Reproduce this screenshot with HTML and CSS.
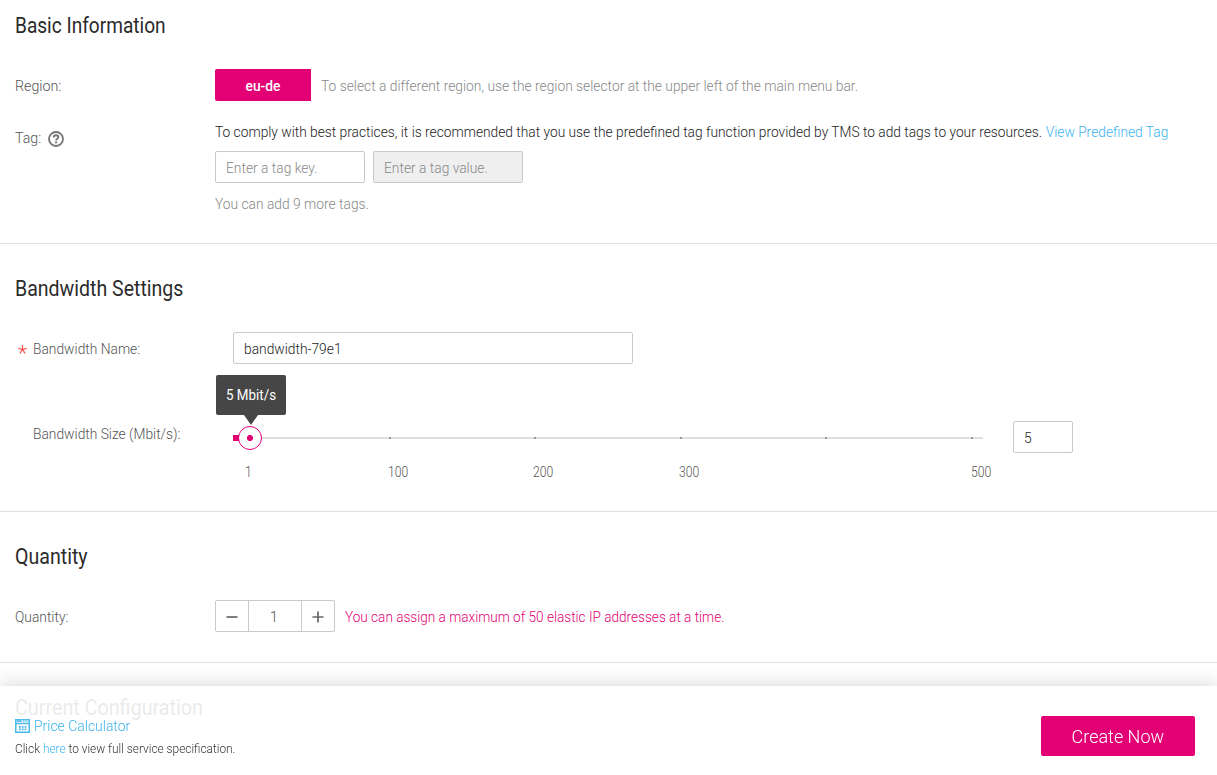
FILE: index.html
```
<!DOCTYPE html>
<html lang="en">
<head>
<meta charset="utf-8">
<title>Assign Elastic IP</title>
<link rel="stylesheet" href="styles.css">
</head>
<body>
<main class="page">
  <section class="section basic">
    <h2 class="title"><span class="t-basic">Basic Information</span></h2>
    <div class="row region-row">
      <div class="label"><span class="t-rlabel">Region:</span></div>
      <div class="region-btn"><span class="t-eu">eu-de</span></div>
      <div class="hint"><span class="t-region">To select a different region, use the region selector at the upper left of the main menu bar.</span></div>
    </div>
    <div class="row tag-row">
      <div class="label tag-label"><span class="t-tag">Tag:</span>
        <svg class="help" viewBox="0 0 16 16"><circle cx="8" cy="8" r="7" fill="none" stroke="#757575" stroke-width="1.8"/><path d="M5.700 6.500C5.700 5 6.700 4.300 8 4.300S10.300 5 10.300 6.200C10.300 7.600 8.100 7.800 8.100 9.500" fill="none" stroke="#757575" stroke-width="1.900"/><rect x="7.100" y="10.500" width="2" height="1.800" fill="#757575"/></svg>
      </div>
      <div class="tag-content">
        <p class="comply"><span>To comply with best practices, it is recommended that you use the predefined tag function provided by TMS to add tags to your resources.</span><a>View Predefined Tag</a></p>
        <div class="tag-inputs"><div class="field"><span class="t-key">Enter a tag key.</span></div><div class="field disabled"><span class="t-value">Enter a tag value.</span></div></div>
        <p class="more"><span class="t-more">You can add 9 more tags.</span></p>
      </div>
    </div>
  </section>

  <section class="section bandwidth">
    <h2 class="title"><span class="t-bandwidth">Bandwidth Settings</span></h2>
    <div class="row name-row">
      <div class="label"><svg class="star" viewBox="0 0 8 8"><path d="M4 0V4M0.200 2.900L4 4L7.800 2.900M1.700 7.400L4 4L6.300 7.400" fill="none" stroke="#f4514f" stroke-width="1.100"/></svg><span class="t-name">Bandwidth Name:</span></div>
      <div class="field name-field"><span class="t-bw">bandwidth-79e1</span></div>
    </div>
    <div class="row size-row">
      <div class="label"><span class="t-size">Bandwidth Size (Mbit/s):</span></div>
      <div class="slider">
        <div class="track">
          <i class="tick" style="left:156px"></i><i class="tick" style="left:301px"></i><i class="tick" style="left:447px"></i><i class="tick" style="left:592px"></i><i class="tick" style="left:738px"></i>
          <i class="fill"></i>
          <i class="knob"></i>
          <div class="tip"><span class="t-tip">5 Mbit/s</span></div>
        </div>
        <div class="scale">
          <span style="left:12px">1</span><span style="left:155px">100</span><span style="left:300px">200</span><span style="left:446px">300</span><span style="left:738px">500</span>
        </div>
      </div>
      <div class="field size-field"><span class="t-five">5</span></div>
    </div>
  </section>

  <section class="section quantity">
    <h2 class="title"><span class="t-quantity">Quantity</span></h2>
    <div class="row quantity-row">
      <div class="label"><span class="t-qlabel">Quantity:</span></div>
      <div class="stepper">
        <div class="step"><svg viewBox="0 0 12 12"><path d="M0.500 6H11.500" stroke="#666" stroke-width="1.700"/></svg></div>
        <div class="count"><span>1</span></div>
        <div class="step"><svg viewBox="0 0 12 12"><path d="M0.500 6H11.500M6 0.500V11.500" stroke="#666" stroke-width="1.700"/></svg></div>
      </div>
      <div class="limit"><span class="t-limit">You can assign a maximum of 50 elastic IP addresses at a time.</span></div>
    </div>
  </section>

  <section class="current">
    <h2 class="title"><span class="t-current">Current Configuration</span></h2>
  </section>
</main>

<footer class="footer">
  <div class="links">
    <div class="price"><svg class="calc" viewBox="0 0 15 14"><rect x="0.750" y="0.750" width="13.500" height="12.500" fill="none" stroke="#4ab9ee" stroke-width="1.500"/><path d="M0 4.500H15" stroke="#4ab9ee" stroke-width="1.500"/><path d="M2 2.200H6.500" stroke="#4ab9ee" stroke-width="1.500"/><path d="M8 2.400H12.500" stroke="#4ab9ee" stroke-width="1" stroke-dasharray="1 0.700"/><path d="M4 7.900H11.500M4 10.400H11.500" stroke="#4ab9ee" stroke-width="1.700" stroke-dasharray="1.800 1"/></svg><a class="t-price">Price Calculator</a></div>
    <p class="spec"><span class="t-spec">Click <a>here</a> to view full service specification.</span></p>
  </div>
  <div class="create"><span class="t-create">Create Now</span></div>
</footer>
</body>
</html>
```
FILE: styles.css
```
* { box-sizing: border-box; }
body { margin: 0; height: 775px; overflow: hidden; background: #fff; color: #1c1c1c; font: 300 15px/20px Roboto, "Liberation Sans", sans-serif; }
h2, p { margin: 0; }
span, a { white-space: nowrap; }
a { color: #3cb4ee; }
.section { padding: 0 15px; border-bottom: 1px solid #dfdfdf; }
.title { font-size: 22px; font-weight: 400; line-height: 30px; color: #2b2b2b; }
.row { display: flex; }
.label { width: 200px; flex: none; color: #555; }
.field { display: flex; align-items: center; height: 32px; padding: 2px 10px 0; border: 1px solid #c9c9c9; border-radius: 2px; background: #fff; color: #1c1c1c; }

/* Condensed lettering: each text is narrowed horizontally */
[class^="t-"] { display: inline-block; transform-origin: 0 50%; transform: scaleX(.92); }
.title .t-basic { transform: scaleX(.867); }
.title .t-bandwidth { transform: scaleX(.888); }
.title .t-quantity { transform: scaleX(.89); }
.title .t-current { transform: scaleX(.897); }
.label .t-rlabel, .label .t-tag { transform: scaleX(.95); }
.limit .t-limit { transform: scaleX(.906); }
.price .t-price { transform: scaleX(.93); }
.spec .t-spec { transform: scaleX(.913); }
.tip .t-tip { transform: scaleX(.893); transform-origin: 50% 50%; }
.region-btn .t-eu { transform-origin: 50% 50%; }
.create .t-create { transform: scaleX(.948); transform-origin: 50% 50%; }

.basic { height: 244px; padding-top: 11px; }
.region-row { margin-top: 28px; align-items: center; height: 32px; }
.region-row .label { padding-top: 2px; }
.region-btn { display: flex; justify-content: center; align-items: center; width: 96px; height: 32px; padding-top: 2px; border-radius: 2px 0 0 2px; background: #e20074; color: #fff; font-weight: 500; }
.hint { margin-left: 10px; padding-top: 2px; color: #888; }
.tag-row { margin-top: 21px; }
.tag-label { display: flex; gap: 5px; padding-top: 6px; }
.help { width: 16px; height: 16px; margin-top: 3px; }
.comply { display: inline-flex; gap: 4px; vertical-align: top; transform-origin: 0 50%; transform: scaleX(.9175); }
.tag-content { width: 1000px; flex: none; }
.tag-inputs { display: flex; gap: 8px; margin-top: 9px; }
.tag-inputs .field { width: 150px; color: #888; }
.tag-inputs .disabled { background: #efefef; }
.more { margin-top: 11px; color: #888; }

.bandwidth { height: 268px; padding-top: 30px; }
.name-row { margin-top: 28px; padding-left: 3px; align-items: center; }
.name-row .label { display: flex; align-items: center; gap: 6px; width: 215px; padding-top: 2px; }
.star { width: 9px; height: 9px; }
.name-field { width: 400px; }
.size-row { margin-top: 57px; padding-left: 18px; }
.size-row .label { padding-top: 3px; }
.slider { width: 750px; padding-top: 16px; }
.track { position: relative; height: 2px; background: #dfdfdf; }
.tick { position: absolute; top: 0; width: 2px; height: 2px; background: #999; }
.fill { position: absolute; left: 0; top: -2px; width: 6px; height: 6px; background: #e20074; }
.knob { position: absolute; left: 5px; top: -11px; width: 24px; height: 24px; border: 1px solid #e20074; border-radius: 50%; background: radial-gradient(circle, #e20074 2.700px, #fff 3.400px); }
.tip { position: absolute; left: -17px; top: -62px; width: 70px; height: 40px; display: flex; align-items: center; justify-content: center; border-radius: 2px; background: #464646; color: #fff; font-weight: 400; }
.tip::after { content: ""; position: absolute; left: 28px; top: 40px; border: 7px solid transparent; border-top: 10px solid #464646; border-bottom: 0; }
.scale { position: relative; height: 20px; margin-top: 23px; font-size: 14px; color: #555; }
.scale span { position: absolute; top: 0; transform-origin: 0 50%; transform: scaleX(.87); }
.size-field { width: 60px; margin-left: 30px; }

.quantity { height: 151px; padding-top: 30px; }
.quantity-row { margin-top: 28px; align-items: center; }
.quantity-row .label, .limit { padding-top: 2px; }
.stepper { display: flex; width: 120px; height: 32px; border: 1px solid #c9c9c9; border-radius: 2px; color: #555; }
.step { display: flex; align-items: center; justify-content: center; width: 32px; padding-top: 2px; }
.step svg { width: 12px; height: 12px; }
.count { display: flex; align-items: center; justify-content: center; flex: 1; padding-top: 2px; padding-right: 2px; border: solid #c9c9c9; border-width: 0 1px; }
.limit { margin-left: 10px; color: #e20074; }

.current { padding: 30px 15px 0; }
.footer { position: fixed; left: 0; right: 0; bottom: 0; display: flex; justify-content: space-between; height: 89px; padding: 30px 22px 0 15px; background: rgba(255,255,255,.9); box-shadow: 0 -4px 16px rgba(30,45,40,.14); }
.price { display: flex; align-items: center; gap: 4px; }
.calc { width: 15px; height: 14px; margin-top: -1px; }
.spec { margin-top: 3px; font-size: 13px; color: #333; }
.create { display: flex; align-items: center; justify-content: center; width: 154px; height: 40px; padding-top: 1px; border-radius: 2px; background: #e20074; color: #fff; font-size: 19px; }
```
